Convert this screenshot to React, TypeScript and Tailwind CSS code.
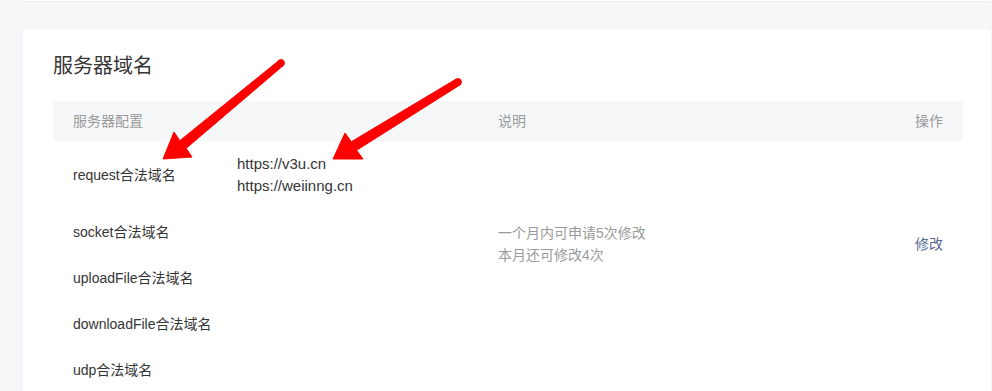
import React from 'react';

interface DomainRow {
  label: string;
  urls: string[];
}

const rows: DomainRow[] = [
  { label: 'request合法域名', urls: ['https://v3u.cn', 'https://weiinng.cn'] },
  { label: 'socket合法域名', urls: [] },
  { label: 'uploadFile合法域名', urls: [] },
  { label: 'downloadFile合法域名', urls: [] },
  { label: 'udp合法域名', urls: [] },
];

function Arrows() {
  return (
    <svg
      className="pointer-events-none absolute left-0 top-0"
      width={992}
      height={391}
      viewBox="0 0 992 391"
    >
      <g fill="#fe0000" stroke="#fe0000" strokeWidth={1} strokeLinejoin="round">
        <polygon points="279,60.4 179.8,140.7 174,132 163,159 192,157 186.2,148.3 283.2,65.6" />
        <circle cx={281} cy={63} r={3.4} />
        <polygon points="456.2,79 351.4,141.7 345,133 333,159 363,159 356.6,150.3 459.8,85" />
        <circle cx={458} cy={82} r={3.4} />
      </g>
    </svg>
  );
}

export default function App() {
  return (
    <div
      className="relative min-h-screen overflow-hidden bg-[#f6f7f9] text-[14px] text-[#353535]"
      style={{ fontFamily: '"Liberation Sans", "Noto Sans CJK SC", sans-serif' }}
    >
      {/* tail of the card above */}
      <div className="ml-[24px] mr-[2px] h-[1px] bg-white shadow-[0_1px_1px_rgba(0,0,0,0.04)]" />

      <div className="ml-[23px] mr-[1px] mt-[28px] rounded-[3px] bg-white pb-8 pl-[30px] pr-[28px] pt-[23px]">
        <h2 className="text-[20px] leading-[28px] font-normal text-[#353535]">服务器域名</h2>

        <div className="mt-[21px]">
          {/* header */}
          <div className="grid h-[40px] grid-cols-[425px_1fr_auto] items-center bg-[#f6f7f9] text-[#9a9a9a]">
            <div className="px-5">服务器配置</div>
            <div className="px-5">说明</div>
            <div className="px-5 text-right">操作</div>
          </div>

          {/* body */}
          <div className="grid grid-cols-[164px_261px_1fr_auto] items-center leading-[22px]">
            {rows.map((row, i) => (
              <React.Fragment key={row.label}>
                <div className="whitespace-nowrap px-5 py-3" style={{ gridRow: i + 1, gridColumn: 1 }}>
                  {row.label}
                </div>
                <div className="px-5 py-3 text-[15px]" style={{ gridRow: i + 1, gridColumn: 2 }}>
                  {row.urls.map((u) => (
                    <div key={u}>{u}</div>
                  ))}
                </div>
              </React.Fragment>
            ))}
            <div className="col-start-3 row-start-1 row-span-4 self-center px-5 text-[#9a9a9a]">
              <div>一个月内可申请5次修改</div>
              <div>本月还可修改4次</div>
            </div>
            <div className="col-start-4 row-start-1 row-span-4 self-center px-5 text-right text-[#576b95]">
              修改
            </div>
          </div>
        </div>
      </div>

      <Arrows />
    </div>
  );
}
